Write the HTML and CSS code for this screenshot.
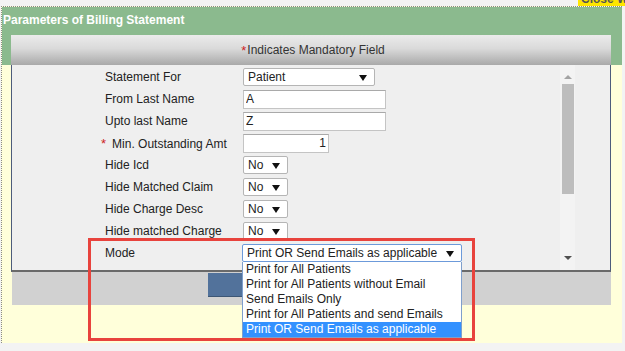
FILE: index.html
```html
<!DOCTYPE html>
<html lang="en">
<head>
    <meta charset="UTF-8">
    <title>Parameters of Billing Statement</title>
    <link rel="stylesheet" href="styles.css">
</head>
<body>
    <div class="close-tab"><span>Close Window</span></div>

    <div class="dialog">
        <div class="dialog-head">
            <h1>Parameters of Billing Statement</h1>
            <div class="mandatory-bar"><span class="req">*</span>Indicates Mandatory Field</div>
        </div>

        <div class="dialog-body">
            <div class="form-panel">
                <div class="fields">
                    <div class="row">
                        <label>Statement For</label>
                        <span class="select w-patient"><span>Patient</span></span>
                    </div>
                    <div class="row">
                        <label>From Last Name</label>
                        <input type="text" class="text-input" value="A">
                    </div>
                    <div class="row">
                        <label>Upto last Name</label>
                        <input type="text" class="text-input" value="Z">
                    </div>
                    <div class="row">
                        <label class="required"><span class="req">*</span>Min. Outstanding Amt</label>
                        <input type="text" class="text-input amount" value="1">
                    </div>
                    <div class="row">
                        <label>Hide Icd</label>
                        <span class="select w-small"><span>No</span></span>
                    </div>
                    <div class="row">
                        <label>Hide Matched Claim</label>
                        <span class="select w-small"><span>No</span></span>
                    </div>
                    <div class="row">
                        <label>Hide Charge Desc</label>
                        <span class="select w-small"><span>No</span></span>
                    </div>
                    <div class="row">
                        <label>Hide matched Charge</label>
                        <span class="select w-small"><span>No</span></span>
                    </div>
                    <div class="row">
                        <label>Mode</label>
                        <span class="select w-mode focused"><span>Print OR Send Emails as applicable</span></span>
                    </div>
                </div>

                <div class="scrollbar">
                    <div class="arrow-up"></div>
                    <div class="thumb"></div>
                    <div class="track"></div>
                    <div class="arrow-down"></div>
                </div>
            </div>

            <div class="button-bar">
                <button class="generate-button"></button>
            </div>
        </div>

        <!-- open list of the Mode select -->
        <ul class="mode-list">
            <li>Print for All Patients</li>
            <li>Print for All Patients without Email</li>
            <li>Send Emails Only</li>
            <li>Print for All Patients and send Emails</li>
            <li class="selected">Print OR Send Emails as applicable</li>
        </ul>

        <div class="highlight-box"></div>
    </div>
</body>
</html>
```

FILE: styles.css
```css
:root {
    --page-bg: #f3f3f3;
    --green: #8bba8e;
    --yellow: #ffffda;
    --panel: #efefef;
    --panel-edge: #4d5c7c;
    --bar-gray: #d1d1d1;
    --text: #222222;
    --red: #cc2222;
    --highlight: #3391ff;
    --box-red: #e8433d;
}

* {
    box-sizing: border-box;
    margin: 0;
    padding: 0;
}

body {
    background-color: var(--page-bg);
    font-family: 'Liberation Sans', Arial, sans-serif;
    font-size: 12px;
    color: var(--text);
    position: relative;
    height: 351px;
    overflow: hidden;
}

.close-tab {
    position: absolute;
    top: 0;
    left: 578px;
    width: 47px;
    height: 6px;
    overflow: hidden;
    background: #ffe600;
}

.close-tab span {
    display: block;
    margin-top: -8px;
    padding-left: 3px;
    font-weight: bold;
    font-size: 12px;
    line-height: 14px;
    color: #555;
    white-space: nowrap;
}

.dialog {
    position: relative;
    width: 621px;
    height: 337px;
    margin: 6px 0 0 1px;
    border-top: 1px dotted #8a8a8a;
    border-left: 1px dotted #8a8a8a;
    background-color: var(--yellow);
}

.dialog-head {
    background-color: var(--green);
}

.dialog-head h1 {
    height: 28px;
    padding: 6px 0 0 1px;
    font-size: 12px;
    font-weight: bold;
    color: #ffffff;
    line-height: 14px;
}

.mandatory-bar {
    height: 30px;
    margin: 0 11px 0 9px;
    display: flex;
    align-items: center;
    justify-content: center;
    padding-left: 4px;
    background: linear-gradient(#ebebeb, #dadada 45%, #a9a9a9);
    color: #333;
}

.req {
    color: var(--red);
    font-size: 13px;
    margin-right: 1px;
}

.dialog-body {
    padding: 0 11px 0 9px;
}

.form-panel {
    height: 207px;
    display: flex;
    background-color: var(--panel);
    border-left: 1px solid var(--panel-edge);
    border-right: 1px solid var(--panel-edge);
    border-bottom: 2px solid #6a6a6a;
}

.fields {
    flex: 1;
    padding: 3px 0 0 93px;
    display: flex;
    flex-direction: column;
    gap: 4px;
}

.row {
    display: flex;
    align-items: center;
    height: 18px;
}

.row label {
    width: 138px;
    flex-shrink: 0;
}

.row label.required {
    margin-left: -4px;
    width: 142px;
}

.row label.required .req {
    margin-right: 6px;
}

.text-input {
    width: 143px;
    height: 19px;
    border: 1px solid #c4c4c4;
    border-top-color: #a9a9a9;
    background: #ffffff;
    font-family: 'Liberation Sans', Arial, sans-serif;
    font-size: 12px;
    color: var(--text);
    padding: 0 2px;
}

.text-input.amount {
    width: 86px;
    text-align: right;
}

.select {
    position: relative;
    display: flex;
    align-items: center;
    height: 18px;
    padding-left: 4px;
    background: #ffffff;
    border: 1px solid #b5b5b5;
    border-radius: 2px;
}

.select::after {
    content: "";
    position: absolute;
    right: 7px;
    top: 6px;
    border-left: 4px solid transparent;
    border-right: 4px solid transparent;
    border-top: 6px solid #111;
}

.w-patient {
    width: 132px;
}

.w-small {
    width: 45px;
}

.w-mode {
    width: 220px;
    margin-left: -1px;
}

.select.focused {
    border-color: #6c9ada;
}

.scrollbar {
    width: 15px;
    margin-right: 35px;
    display: flex;
    flex-direction: column;
    align-items: center;
    background-color: #f3f3f3;
}

.arrow-up {
    margin: 10px 0 5px;
    border-left: 4px solid transparent;
    border-right: 4px solid transparent;
    border-bottom: 4px solid #a3a3a3;
}

.thumb {
    width: 12px;
    height: 110px;
    background-color: #bdbdbd;
}

.track {
    flex: 1;
}

.arrow-down {
    margin: 0 0 10px;
    border-left: 4px solid transparent;
    border-right: 4px solid transparent;
    border-top: 4px solid #505050;
}

.button-bar {
    height: 33px;
    margin-left: 1px;
    padding-top: 1px;
    display: flex;
    justify-content: center;
    background-color: var(--bar-gray);
}

.generate-button {
    width: 208px;
    height: 24px;
    border: none;
    border-bottom: 1px solid #3c5675;
    background-color: #52729b;
}

.mode-list {
    position: absolute;
    left: 240px;
    top: 255px;
    width: 220px;
    list-style: none;
    background: #ffffff;
    border: 1px solid #7f9fcc;
    border-top: none;
}

.mode-list li {
    height: 15px;
    line-height: 15px;
    padding-left: 3px;
    white-space: nowrap;
}

.mode-list li.selected {
    background-color: var(--highlight);
    color: #ffffff;
}

.highlight-box {
    position: absolute;
    left: 86px;
    top: 231px;
    width: 387px;
    height: 103px;
    border: 3px solid var(--box-red);
}
```
